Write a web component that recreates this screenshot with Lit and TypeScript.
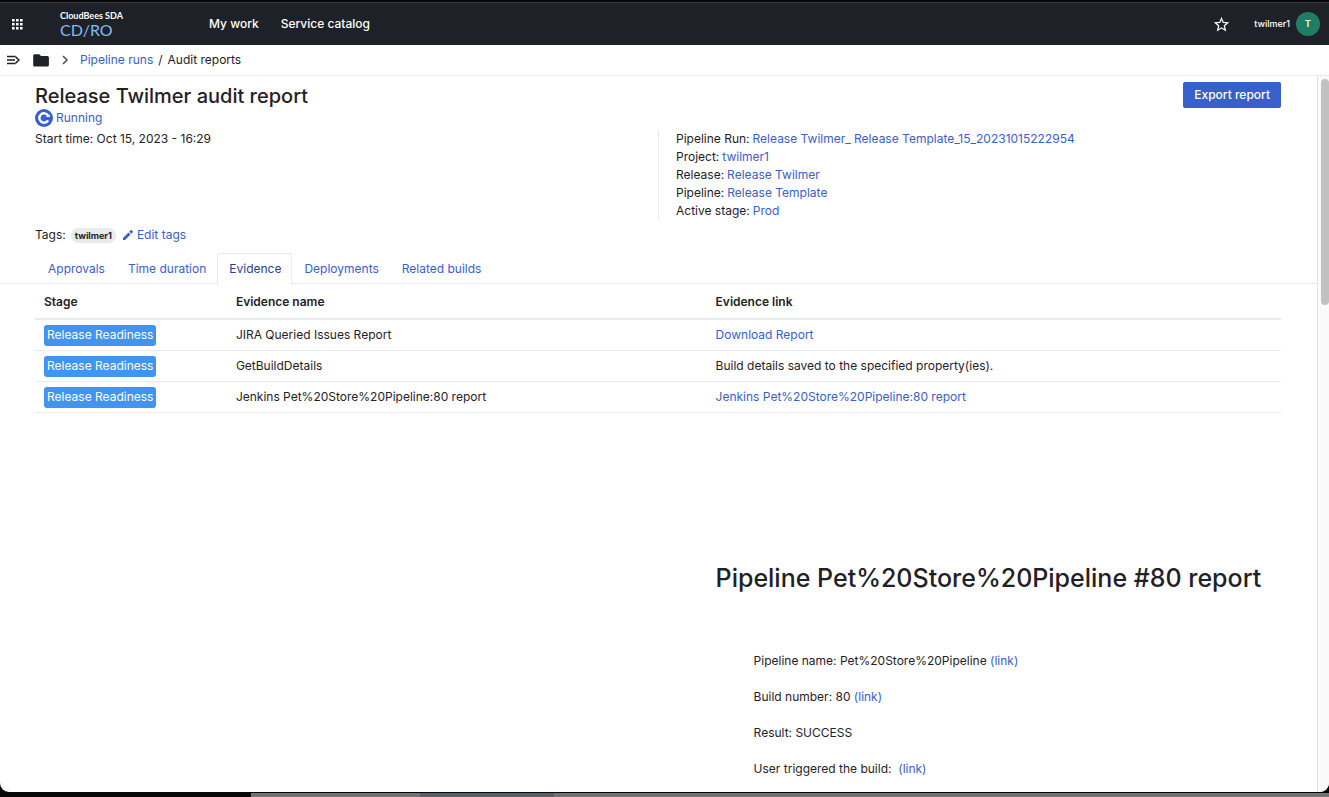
import { LitElement, html, css } from "lit";
import { customElement } from "lit/decorators.js";

interface Evidence {
  stage: string;
  name: string;
  text: string;
  linked: boolean;
}

const details = [
  { label: "Pipeline Run:", value: "Release Twilmer_ Release Template_15_20231015222954" },
  { label: "Project:", value: "twilmer1" },
  { label: "Release:", value: "Release Twilmer" },
  { label: "Pipeline:", value: "Release Template" },
  { label: "Active stage:", value: "Prod" },
];

const tabs = ["Approvals", "Time duration", "Evidence", "Deployments", "Related builds"];

const evidence: Evidence[] = [
  { stage: "Release Readiness", name: "JIRA Queried Issues Report", text: "Download Report", linked: true },
  { stage: "Release Readiness", name: "GetBuildDetails", text: "Build details saved to the specified property(ies).", linked: false },
  { stage: "Release Readiness", name: "Jenkins Pet%20Store%20Pipeline:80 report", text: "Jenkins Pet%20Store%20Pipeline:80 report", linked: true },
];

@customElement("app-header")
export class AppHeader extends LitElement {
  static styles = css`
    :host {
      display: flex;
      align-items: center;
      height: 43px;
      background: #1f2129;
      border-top: 1px solid #3a3b42;
      box-sizing: border-box;
      color: #fff;
      flex: none;
    }
    button {
      border: 0;
      background: none;
      padding: 0;
      color: inherit;
      font: inherit;
      display: flex;
      cursor: pointer;
    }
    .apps { margin-left: 11px; }
    .brand {
      margin-left: 37px;
      width: 149px;
      color: inherit;
      text-decoration: none;
      font-family: Lato, sans-serif;
    }
    .company { display: block; font-size: 9px; line-height: 11px; font-weight: 700; }
    .product { display: block; font-size: 16px; line-height: 18px; color: #7fbdf5; }
    nav { display: flex; gap: 22px; flex: 1; }
    nav a { color: inherit; text-decoration: none; font-weight: 500; }
    .user { margin-left: 24px; margin-right: 9px; align-items: center; gap: 6px; font-size: 9px; font-weight: 500; }
    .avatar {
      width: 24px;
      height: 24px;
      border-radius: 50%;
      background: #1f7d63;
      display: grid;
      place-items: center;
      font-weight: 600;
    }
  `;

  render() {
    return html`
      <button class="apps" aria-label="Applications">
        <svg width="12" height="12" viewBox="0 0 12 12" fill="#fff">
          <path d="M1 1h2.600v2.600H1zM5 1h2.600v2.600H5zM9 1h2.600v2.600H9zM1 5h2.600v2.600H1zM5 5h2.600v2.600H5zM9 5h2.600v2.600H9zM1 9h2.600v2.600H1zM5 9h2.600v2.600H5zM9 9h2.600v2.600H9z" />
        </svg>
      </button>
      <a class="brand" href="#"><span class="company">CloudBees SDA</span><span class="product">CD/RO</span></a>
      <nav aria-label="Main"><a href="#">My work</a><a href="#">Service catalog</a></nav>
      <button aria-label="Favorites">
        <svg width="17" height="17" viewBox="1 1 22 22" fill="#fff">
          <path d="M22 9.24l-7.19-.62L12 2 9.19 8.63 2 9.24l5.46 4.73L5.82 21 12 17.27 18.18 21l-1.63-7.03L22 9.24zM12 15.4l-3.76 2.27 1-4.28-3.32-2.88 4.38-.38L12 6.1l1.71 4.04 4.38.38-3.32 2.88 1 4.28L12 15.4z" />
        </svg>
      </button>
      <button class="user"><span>twilmer1</span><span class="avatar">T</span></button>
    `;
  }
}

@customElement("app-root")
export class AppRoot extends LitElement {
  static styles = css`
    :host {
      display: flex;
      flex-direction: column;
      height: 100vh;
      box-sizing: border-box;
      padding-top: 2px;
      overflow: hidden;
      background: #08080a;
      font: 12px/18px Inter, sans-serif;
      color: #1f2129;
    }
    a { color: #3860cb; text-decoration: none; }
    svg { display: block; flex: none; }
    button { font: inherit; cursor: pointer; }
    .icon { border: 0; background: none; padding: 0; color: inherit; }

    .window {
      flex: 1;
      min-height: 0;
      display: flex;
      flex-direction: column;
      background: #fff;
      border-radius: 0 0 9px 9px;
      overflow: hidden;
    }
    .crumbs {
      display: flex;
      align-items: center;
      height: 30px;
      padding-left: 7px;
      border-bottom: 1px solid #e8eaee;
      flex: none;
    }
    .crumbs .folder { margin-left: 13px; }
    .crumbs .chevron { margin: 0 11px 0 13px; }
    .crumbs .slash { margin: 0 5px; }

    .body { flex: 1; min-height: 0; display: flex; }
    main { flex: 1; min-width: 0; overflow: hidden; }
    .track {
      width: 11px;
      border-left: 1px solid #e3e3e3;
      background: #fafafa;
      padding-top: 3px;
      flex: none;
    }
    .thumb { margin-left: 3px; height: 226px; background: #c1c1c1; border-radius: 4px; }

    .summary { padding: 6px 36px 0 35px; }
    .title { display: flex; justify-content: space-between; align-items: flex-start; }
    h1 { margin: 0; font-size: 20px; line-height: 28px; font-weight: 500; }
    .export {
      border: 0;
      border-radius: 2px;
      background: #3860cb;
      color: #fff;
      font-weight: 500;
      line-height: 18px;
      padding: 4px 11px;
    }
    .status { display: flex; align-items: center; gap: 3px; height: 16px; color: #3860cb; }
    .facts { display: grid; grid-template-columns: 1fr 1fr; margin-top: 4px; }
    dl { margin: 0; padding-left: 17px; border-left: 1px solid #e8eaee; }
    dl div { display: flex; gap: 3px; }
    dd { margin: 0; }
    .tags { display: flex; align-items: center; height: 18px; margin-top: 6px; }
    .tag {
      margin: 0 7px 0 5px;
      padding: 0 4px;
      border-radius: 8px;
      background: #e8eaee;
      font-size: 9px;
      line-height: 15px;
      font-weight: 700;
    }
    .tags a { display: flex; align-items: center; gap: 4px; }

    .tabs {
      display: flex;
      margin-top: 9px;
      padding-left: 36px;
      border-bottom: 1px solid #e8eaee;
    }
    .tabs a { padding: 6px 10px 6px 11px; border: 1px solid transparent; border-bottom: 0; margin-bottom: -1px; }
    .tabs a[aria-current] {
      color: #26418f;
      background: #fff;
      border-color: #e8eaee;
      border-radius: 3px 3px 0 0;
    }

    .content { padding: 0 36px 0 35px; }
    table { width: 100%; border-collapse: separate; border-spacing: 0; table-layout: fixed; }
    .col-stage { width: 15.4%; }
    .col-name { width: 38.5%; }
    th, td { text-align: left; padding: 4px 9px; height: 22px; border-bottom: 1px solid #e8eaee; }
    th { font-weight: 600; padding: 7px 9px 5px; border-bottom-width: 2px; }
    .stage {
      display: block;
      width: fit-content;
      padding: 1px 3px 2px;
      background: #4195f0;
      color: #fff;
      border-radius: 3px;
    }
    .report { margin-left: 53.9%; padding: 147px 0 0 9px; }
    h2 { margin: 0; font-size: 25px; line-height: 36px; font-weight: 500; white-space: nowrap; }
    .report ul { list-style: none; margin: 56px 0 0; padding: 0 0 0 38px; display: grid; gap: 18px; }

    .dock { height: 5px; flex: none; display: flex; box-sizing: border-box; border-top: 1px solid #08080a; }
    .dock span { background: #737171; flex: 1; }
    .dock .dark { background: #08080a; flex: none; width: 251px; }
    .dock .mid { flex: none; width: 169px; }
    .dock .slate { background: #5c5f64; flex: none; width: 134px; }
  `;

  render() {
    return html`
      <app-header></app-header>
      <div class="window">
        <div class="crumbs">
          <button class="icon" aria-label="Expand menu">
            <svg width="13" height="10" viewBox="0 0 13 10" fill="none" stroke="#1f2129" stroke-width="1.500">
              <path d="M0 1.500h8.500M0 5h8M0 8.500h8.500M8.600 1.900 11.900 5 8.600 8.100" />
            </svg>
          </button>
          <a class="folder" href="#" aria-label="Projects">
            <svg width="16" height="13" viewBox="0 0 16 13" fill="#1f2129">
              <path d="M1.500 .3h4.800l1.700 1.600h6.400A1.500 1.500 0 0 1 15.900 3.400v7.500a1.500 1.500 0 0 1-1.500 1.500H1.700A1.500 1.500 0 0 1 .2 10.900V1.700A1.400 1.400 0 0 1 1.500 .3z" />
            </svg>
          </a>
          <svg class="chevron" width="7" height="10" viewBox="0 0 7 10" fill="none" stroke="#4f5158" stroke-width="1.600">
            <path d="M1 1l4 4-4 4" />
          </svg>
          <a href="#">Pipeline runs</a><span class="slash">/</span><span>Audit reports</span>
        </div>
        <div class="body">
          <main>
            <section class="summary">
              <div class="title">
                <h1>Release Twilmer audit report</h1>
                <button class="export">Export report</button>
              </div>
              <div class="status">
                <svg width="18" height="18" viewBox="0 0 18 18">
                  <circle cx="9" cy="9" r="9" fill="#3860cb" />
                  <path d="M13.100 6.600A4.700 4.700 0 1 0 13.100 11.400" fill="none" stroke="#fff" stroke-width="2.400" />
                  <path d="M10.500 8h4.500V5.500z" fill="#fff" />
                </svg>
                <span>Running</span>
              </div>
              <div class="facts">
                <div>Start time: Oct 15, 2023 - 16:29</div>
                <dl>
                  ${details.map((d) => html`<div><dt>${d.label}</dt><dd><a href="#">${d.value}</a></dd></div>`)}
                </dl>
              </div>
              <div class="tags">
                <span>Tags:</span><span class="tag">twilmer1</span>
                <a href="#">
                  <svg width="10" height="10" viewBox="0 0 10 10" fill="#3860cb">
                    <path d="M0 8v2h2l5.500-5.500-2-2zM6.200 1.800l2 2L9.700 2.300a.7.7 0 0 0 0-1L8.700.3a.7.7 0 0 0-1 0z" />
                  </svg>
                  Edit tags
                </a>
              </div>
            </section>
            <nav class="tabs" aria-label="Report sections">
              ${tabs.map((t) => t === "Evidence" ? html`<a href="#" aria-current="page">${t}</a>` : html`<a href="#">${t}</a>`)}
            </nav>
            <div class="content">
              <table>
                <colgroup><col class="col-stage" /><col class="col-name" /><col /></colgroup>
                <thead>
                  <tr><th scope="col">Stage</th><th scope="col">Evidence name</th><th scope="col">Evidence link</th></tr>
                </thead>
                <tbody>
                  ${evidence.map((e) => html`
                    <tr>
                      <td><span class="stage">${e.stage}</span></td>
                      <td>${e.name}</td>
                      <td>${e.linked ? html`<a href="#">${e.text}</a>` : e.text}</td>
                    </tr>`)}
                </tbody>
              </table>
              <section class="report">
                <h2>Pipeline Pet%20Store%20Pipeline #80 report</h2>
                <ul>
                  <li>Pipeline name: Pet%20Store%20Pipeline <a href="#">(link)</a></li>
                  <li>Build number: 80 <a href="#">(link)</a></li>
                  <li>Result: SUCCESS</li>
                  <li>User triggered the build: &nbsp;<a href="#">(link)</a></li>
                </ul>
              </section>
            </div>
          </main>
          <div class="track"><div class="thumb"></div></div>
        </div>
      </div>
      <div class="dock" aria-hidden="true">
        <span class="dark"></span><span class="mid"></span><span class="slate"></span><span></span>
      </div>
    `;
  }
}
